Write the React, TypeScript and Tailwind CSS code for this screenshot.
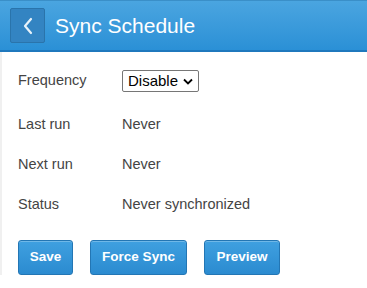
export default function App() {
  const rows = [
    { label: "Last run", value: "Never" },
    { label: "Next run", value: "Never" },
    { label: "Status", value: "Never synchronized" },
  ];
  const btn =
    "h-[35px] whitespace-nowrap rounded-[3px] border border-[#2376b4] bg-gradient-to-b from-[#3fa0e0] to-[#2b8bd0] px-0 text-[13.5px] font-bold text-white shadow-[inset_0_1px_0_rgba(255,255,255,0.25)]";

  return (
    <div className="h-[288px] w-[367px] overflow-hidden bg-white font-['Liberation_Sans',Arial,sans-serif] text-[#444]">
      <header className="flex h-[52px] items-center gap-[10px] border-t border-b-2 border-t-[#3a8fc8] border-b-[#1f78bd] bg-gradient-to-b from-[#4aa5e0] to-[#2a90d6] pl-[10px]">
        <button className="flex h-[35px] w-[35px] items-center justify-center rounded-[2px] border border-[#2a74ab] bg-[#3384c2]">
          <svg width="14" height="18" viewBox="0 0 14 18" fill="none">
            <path d="M10 2 L4 9 L10 16" stroke="#e8f2fa" strokeWidth="2.2" strokeLinecap="round" strokeLinejoin="round" />
          </svg>
        </button>
        <h1 className="text-[21px] text-white">Sync Schedule</h1>
      </header>

      <div className="border-l-2 border-[#f0f0f0] pl-[16px] pt-[18px]">
        <div className="flex h-[22px] items-center">
          <span className="w-[104px] text-[14.5px]">Frequency</span>
          <div className="flex h-[22px] items-center gap-[5px] rounded-[2px] border border-[#767676] pl-[5px] pr-[5px] text-[15px] text-black">
            Disable
            <svg width="10" height="7" viewBox="0 0 10 7">
              <path d="M1 1.5 L5 5.5 L9 1.5" stroke="#000" strokeWidth="1.8" fill="none" />
            </svg>
          </div>
        </div>

        <div className="mt-[24px] flex flex-col gap-[23px]">
          {rows.map((r) => (
            <div key={r.label} className="flex h-[17px] items-center text-[14.5px]">
              <span className="w-[104px]">{r.label}</span>
              <span>{r.value}</span>
            </div>
          ))}
        </div>

        <div className="mt-[27px] flex gap-[17px]">
          <button className={`${btn} w-[55px]`}>Save</button>
          <button className={`${btn} w-[97px]`}>Force Sync</button>
          <button className={`${btn} w-[76px]`}>Preview</button>
        </div>
      </div>
    </div>
  );
}
